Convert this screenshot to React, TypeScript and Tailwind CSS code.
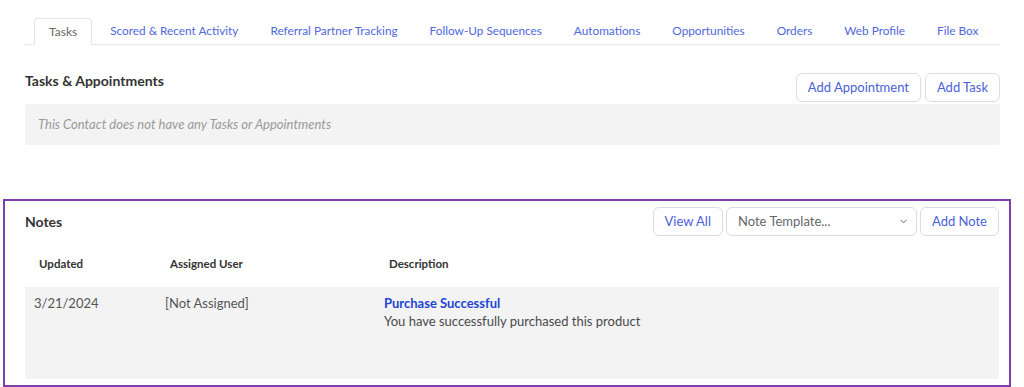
import { ChevronDown } from 'lucide-react'

const tabs = [
  'Scored & Recent Activity',
  'Referral Partner Tracking',
  'Follow-Up Sequences',
  'Automations',
  'Opportunities',
  'Orders',
  'Web Profile',
  'File Box',
]

const OutlineButton = ({ label }: { label: string }) => (
  <button className="h-[29px] px-[11px] rounded-[6px] border border-[#dcdcdc] bg-white text-[13px] text-[#4a5fd9] leading-none whitespace-nowrap">
    {label}
  </button>
)

export default function App() {
  return (
    <div className="w-[1024px] h-[387px] bg-white overflow-hidden font-['Lato',sans-serif] text-[#333]">
      <div className="pl-[24px] w-[1000px] pt-[18px]">
        {/* tabs */}
        <div className="flex h-[27px] border-b border-[#e8e8e8]">
          <div className="ml-[10px] -mb-px h-[27px] px-[14px] flex items-center shrink-0 rounded-t-[4px] border border-[#e4e4e4] border-b-white bg-white text-[12px] text-[#666]">
            Tasks
          </div>
          <div className="ml-[2px] flex">
            {tabs.map((t) => (
              <div key={t} className="px-4 flex items-center shrink-0 whitespace-nowrap text-[11.8px] text-[#5068dc]">
                {t}
              </div>
            ))}
          </div>
        </div>

        {/* tasks */}
        <div className="pl-px mt-[28px] flex items-start justify-between">
          <h2 className="text-[14px] font-bold leading-[16px] text-[#333]">Tasks &amp; Appointments</h2>
          <div className="flex gap-[4px]">
            <OutlineButton label="Add Appointment" />
            <OutlineButton label="Add Task" />
          </div>
        </div>
        <div className="ml-px mt-[2px] h-[41px] rounded-[3px] bg-[#f3f3f3] flex items-center pl-[13px] text-[13px] italic text-[#9a9a9a]">
          This Contact does not have any Tasks or Appointments
        </div>
      </div>

      {/* notes */}
      <div className="mt-[54px] ml-[3px] w-[1008px] h-[188px] border-2 border-[#7d3fae] pl-[20px] pr-[10px] pt-[6px]">
        <div className="flex items-center justify-between h-[29px]">
          <h2 className="text-[14px] font-bold text-[#333]">Notes</h2>
          <div className="flex gap-[3px]">
            <OutlineButton label="View All" />
            <div className="w-[191px] h-[29px] rounded-[6px] border border-[#dcdcdc] bg-white flex items-center justify-between pl-[11px] pr-[7px] text-[13px] text-[#666]">
              <span>Note Template...</span>
              <ChevronDown size={11} strokeWidth={2} className="text-[#555]" />
            </div>
            <OutlineButton label="Add Note" />
          </div>
        </div>

        <div className="h-[51px] pt-[20px] px-[14px] grid grid-cols-[131px_219px_1fr] text-[11.5px] font-bold leading-[16px] text-[#333]">
          <div>Updated</div>
          <div>Assigned User</div>
          <div>Description</div>
        </div>

        <div className="h-[92px] bg-[#f3f3f3] pt-[7px] px-[9px] grid grid-cols-[131px_219px_1fr] text-[13px] leading-[18px] text-[#555]">
          <div>3/21/2024</div>
          <div>[Not Assigned]</div>
          <div>
            <div className="font-bold text-[#1f45d4]">Purchase Successful</div>
            <div className="text-[#4a4a4a]">You have successfully purchased this product</div>
          </div>
        </div>
      </div>
    </div>
  )
}
